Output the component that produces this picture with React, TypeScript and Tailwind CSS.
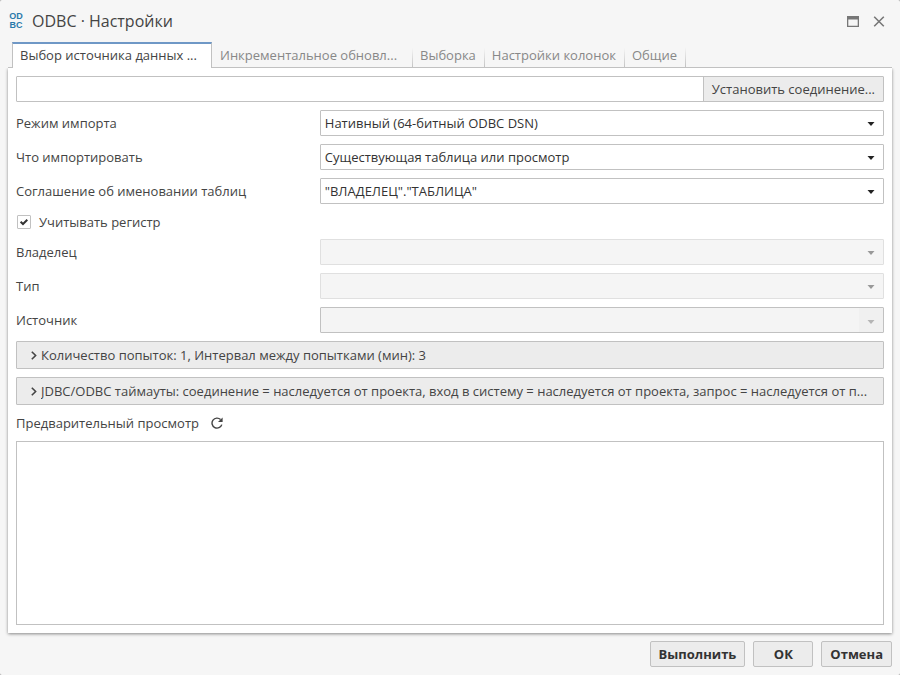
import React, { useState } from 'react';
import clsx from 'clsx';

const tabs = [
    { id: 'source', label: 'Выбор источника данных ...', wide: true },
    { id: 'incremental', label: 'Инкрементальное обновл...', wide: true },
    { id: 'selection', label: 'Выборка', wide: false },
    { id: 'columns', label: 'Настройки колонок', wide: false },
    { id: 'general', label: 'Общие', wide: false },
];

function Caret({ className }: { className?: string }) {
    return (
        <svg viewBox="0 0 8 4" className={clsx('h-1 w-2', className)} aria-hidden="true">
            <path d="M0.5 0H7.5L4 4Z" fill="currentColor" />
        </svg>
    );
}

interface SelectRowProps {
    id: string;
    label: string;
    value?: string;
    disabled?: boolean;
}

function SelectRow({ id, label, value, disabled }: SelectRowProps) {
    return (
        <div className="flex items-center">
            <label htmlFor={id} className="w-[35%] shrink-0">{label}</label>
            <div className="relative min-w-0 flex-1">
                <select
                    id={id}
                    disabled={disabled}
                    className={clsx(
                        'block h-[26px] w-full appearance-none rounded-[1px] border px-1 opacity-100',
                        disabled ? 'border-[#e0e0e0] bg-[#f5f5f5]' : 'border-[#c1c1c1] bg-white text-[#333]'
                    )}
                >
                    {value && <option>{value}</option>}
                </select>
                <Caret
                    className={clsx(
                        'pointer-events-none absolute top-[12px] right-[9px]',
                        disabled ? 'text-[#999]' : 'text-[#222]'
                    )}
                />
            </div>
        </div>
    );
}

function SourceRow() {
    return (
        <div className="flex items-center">
            <label htmlFor="source" className="w-[35%] shrink-0">Источник</label>
            <div className="flex h-[26px] min-w-0 flex-1 rounded-[1px] border border-[#c1c1c1] bg-[#f4f4f4]">
                <input id="source" disabled className="min-w-0 flex-1 px-1" />
                <button
                    type="button"
                    disabled
                    aria-label="Показать источники"
                    className="flex w-6 items-center justify-center bg-[#f0f0f0] pt-1 text-[#b5b5b5]"
                >
                    <Caret />
                </button>
            </div>
        </div>
    );
}

function CollapsedSection({ title }: { title: string }) {
    return (
        <button
            type="button"
            aria-expanded={false}
            className="flex h-7 w-full items-center rounded-[1px] border border-[#c1c1c1] bg-[#ececec] px-[14px] text-left"
        >
            <svg viewBox="0 0 6 9" className="mr-1 h-[9px] w-[6px] shrink-0" fill="none" aria-hidden="true">
                <path d="M0.8 0.8L4.6 4.5L0.8 8.2" stroke="#444" strokeWidth="1.6" />
            </svg>
            <span className="truncate">{title}</span>
        </button>
    );
}

function FooterButton({ children, className }: { children: React.ReactNode; className?: string }) {
    return (
        <button
            type="button"
            className={clsx(
                'h-[26px] rounded-[2px] border border-[#c1c1c1] bg-[#ececec] px-2 font-bold text-[#333]',
                className
            )}
        >
            {children}
        </button>
    );
}

export default function App() {
    const [activeTab, setActiveTab] = useState('source');
    const [caseSensitive, setCaseSensitive] = useState(true);

    return (
        <div className="bg-[#aaa]">
            <div className="flex min-h-screen flex-col rounded-[2px] bg-[#f6f6f6] px-2 pb-2 font-['Open_Sans','Noto_Sans',sans-serif] text-[13px] leading-5 text-[#444]">
                <header className="flex h-[42px] items-center">
                    <div
                        className="w-4 text-center font-['Liberation_Sans',sans-serif] text-[9px] leading-[9px] font-bold text-[#2a7aab]"
                        aria-hidden="true"
                    >
                        OD
                        <br />
                        BC
                    </div>
                    <h1 className="ml-2 flex-1 text-base">ODBC · Настройки</h1>
                    <button type="button" aria-label="Развернуть" className="mr-[14px] text-[#777]">
                        <svg viewBox="0 0 12 11" className="h-[11px] w-3">
                            <path d="M0 0H12V11H0ZM1.3 3.6V9.7H10.7V3.6Z" fill="currentColor" fillRule="evenodd" />
                        </svg>
                    </button>
                    <button type="button" aria-label="Закрыть" className="mr-[7px] text-[#777]">
                        <svg viewBox="0 0 12 11" className="h-[11px] w-3" fill="none">
                            <path d="M1.2 0.8L10.8 10.2M10.8 0.8L1.2 10.2" stroke="currentColor" strokeWidth="1.6" />
                        </svg>
                    </button>
                </header>

                <div role="tablist" className="flex h-[26px] border-b border-[#c1c1c1] pl-1">
                    {tabs.map((tab) => (
                        <button
                            key={tab.id}
                            type="button"
                            role="tab"
                            aria-selected={activeTab === tab.id}
                            onClick={() => setActiveTab(tab.id)}
                            className={clsx(
                                'flex h-[26px] shrink-0 items-center whitespace-nowrap',
                                tab.wide && 'w-[200px]',
                                activeTab === tab.id
                                    ? 'border-x border-t-2 border-x-[#c1c1c1] border-t-[#6f98c6] bg-white px-[7px] pb-[2px]'
                                    : 'px-2 text-[#888]',
                                activeTab !== tab.id &&
                                    !tab.wide &&
                                    'bg-linear-to-t from-[#c1c1c1] to-[#f6f6f6] bg-[length:1px_20px] bg-left-bottom bg-no-repeat'
                            )}
                        >
                            {tab.label}
                        </button>
                    ))}
                    <div className="h-5 w-px self-end bg-linear-to-t from-[#c1c1c1] to-[#f6f6f6]" />
                </div>

                <main className="flex flex-1 flex-col gap-2 bg-white p-2 shadow-[0_1px_3px_rgba(0,0,0,0.45)] [clip-path:inset(0_-4px_-6px_-4px)]">
                    <div className="flex h-[26px] rounded-[1px] border border-[#c1c1c1]">
                        <input aria-label="Строка соединения" className="min-w-0 flex-1 px-1 outline-none" />
                        <button type="button" className="border-l border-[#c1c1c1] bg-[#ececec] px-2">
                            Установить соединение...
                        </button>
                    </div>

                    <SelectRow id="mode" label="Режим импорта" value="Нативный (64-битный ODBC DSN)" />
                    <SelectRow id="what" label="Что импортировать" value="Существующая таблица или просмотр" />
                    <SelectRow id="naming" label="Соглашение об именовании таблиц" value={'"ВЛАДЕЛЕЦ"."ТАБЛИЦА"'} />

                    <label className="flex h-[19px] items-center self-start pl-px">
                        <span className="relative mr-2 h-[14px] w-[14px]">
                            <input
                                type="checkbox"
                                checked={caseSensitive}
                                onChange={(e) => setCaseSensitive(e.target.checked)}
                                className="peer block h-[14px] w-[14px] appearance-none rounded-[1px] border border-[#c1c1c1] bg-white"
                            />
                            <svg
                                viewBox="0 0 14 14"
                                className="pointer-events-none absolute inset-0 hidden h-[14px] w-[14px] peer-checked:block"
                                fill="none"
                            >
                                <path d="M3.6 6.7L6 9L10.3 4.8" stroke="#333" strokeWidth="2" />
                            </svg>
                        </span>
                        Учитывать регистр
                    </label>

                    <SelectRow id="owner" label="Владелец" disabled />
                    <SelectRow id="type" label="Тип" disabled />
                    <SourceRow />

                    <CollapsedSection title="Количество попыток: 1, Интервал между попытками (мин): 3" />
                    <CollapsedSection title="JDBC/ODBC таймауты: соединение = наследуется от проекта, вход в систему = наследуется от проекта, запрос = наследуется от п..." />

                    <div className="flex h-5 items-center gap-3">
                        <h2>Предварительный просмотр</h2>
                        <button type="button" aria-label="Обновить">
                            <svg viewBox="0 0 12 12" className="h-3 w-3" fill="none">
                                <path d="M9.6 2.6A5 5 0 1 0 10.8 7.6" stroke="#444" strokeWidth="1.4" />
                                <path d="M11.6 0.4V5H7Z" fill="#444" />
                            </svg>
                        </button>
                    </div>

                    <section aria-label="Предварительный просмотр" className="flex-1 border border-[#c1c1c1]" />
                </main>

                <footer className="flex justify-end gap-2 pt-2">
                    <FooterButton>Выполнить</FooterButton>
                    <FooterButton className="w-[60px]">ОК</FooterButton>
                    <FooterButton>Отмена</FooterButton>
                </footer>
            </div>
        </div>
    );
}
